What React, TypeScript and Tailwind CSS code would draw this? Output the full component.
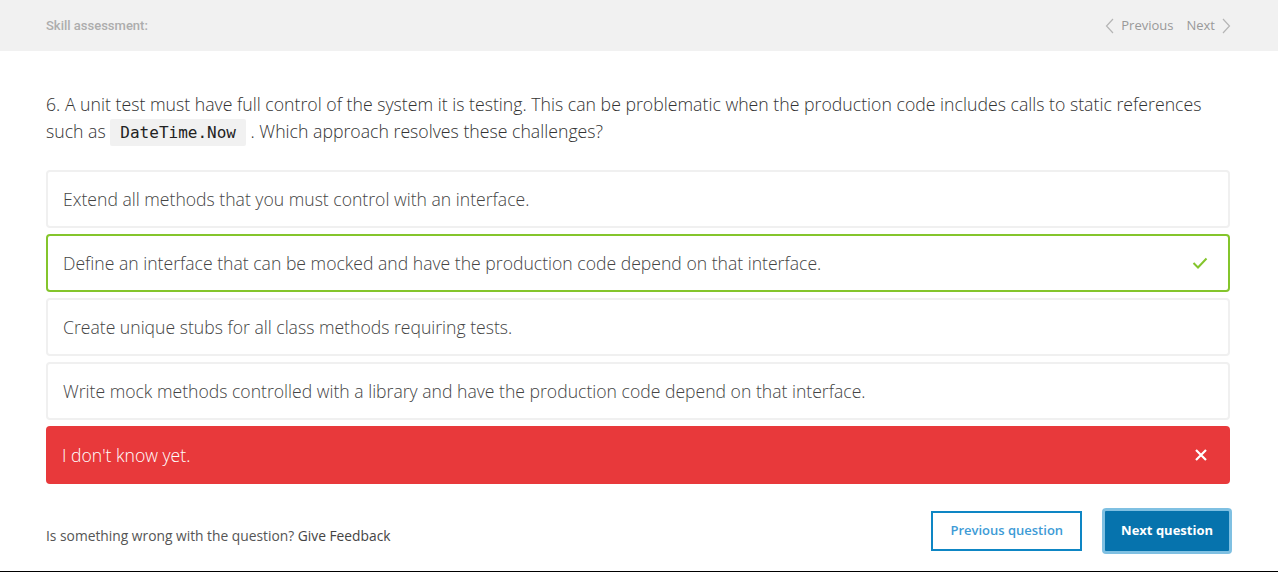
import React from "react";

const options = [
    "Extend all methods that you must control with an interface.",
    "Define an interface that can be mocked and have the production code depend on that interface.",
    "Create unique stubs for all class methods requiring tests.",
    "Write mock methods controlled with a library and have the production code depend on that interface.",
];

const App: React.FC = () => {
    const selected = 1;

    return (
        <div className="w-[1278px] h-[572px] bg-white border-b border-black flex flex-col" style={{ fontFamily: "'Open Sans', sans-serif" }}>
            {/* header */}
            <div className="h-[51px] bg-[#f1f1f1] flex items-center justify-between pl-[46px] pr-[47px] shrink-0">
                <span className="text-[13px] font-medium text-[#adadad]" style={{ fontFamily: "Roboto, sans-serif" }}>Skill assessment:</span>
                <div className="flex items-center gap-[13px] text-[13px] text-[#999999]">
                    <span className="flex items-center gap-[7px]">
                        <svg width="9" height="16" viewBox="0 0 9 16" fill="none" stroke="#b5b5b5" strokeWidth="1.2">
                            <path d="M8 1 L1.5 8 L8 15" />
                        </svg>
                        Previous
                    </span>
                    <span className="flex items-center gap-[7px]">
                        Next
                        <svg width="9" height="16" viewBox="0 0 9 16" fill="none" stroke="#b5b5b5" strokeWidth="1.2">
                            <path d="M1 1 L7.5 8 L1 15" />
                        </svg>
                    </span>
                </div>
            </div>

            <div className="pl-[46px] pr-[48px] pt-[40px] flex flex-col flex-1">
                <p className="text-[17.7px] leading-[27px] font-light text-[#333333]">
                    6. A unit test must have full control of the system it is testing. This can be problematic when the production code includes calls to static references such as{" "}
                    <code className="bg-[#f1f1f1] px-[10px] py-[4px] rounded-[2px] text-[16px] text-[#222] font-normal" style={{ fontFamily: "'DejaVu Sans Mono', monospace" }}>DateTime.Now</code>
                    {" "}. Which approach resolves these challenges?
                </p>

                <div className="mt-[24px] flex flex-col gap-[6px]">
                    {options.map((opt, i) => (
                        <div
                            key={i}
                            className={
                                i === selected
                                    ? "h-[58px] rounded-[4px] border-2 border-[#84c52c] flex items-center justify-between pl-[15px] pr-[20px]"
                                    : "h-[58px] rounded-[4px] border-2 border-[#f0f0f0] flex items-center pl-[15px]"
                            }
                        >
                            <span className="text-[17.6px] font-light text-[#444444]">{opt}</span>
                            {i === selected && (
                                <svg width="16" height="12" viewBox="0 0 16 12" fill="none" stroke="#84c52c" strokeWidth="2">
                                    <path d="M1.5 6 L6 10.5 L14.5 1.5" />
                                </svg>
                            )}
                        </div>
                    ))}
                    <div className="h-[58px] rounded-[4px] bg-[#e8393b] flex items-center justify-between pl-[16px] pr-[22px]">
                        <span className="text-[17.6px] font-light text-white">I don't know yet.</span>
                        <svg width="14" height="14" viewBox="0 0 14 14" fill="none" stroke="white" strokeWidth="2.2">
                            <path d="M2 2 L12 12 M12 2 L2 12" />
                        </svg>
                    </div>
                </div>

                <div className="mt-[24px] flex items-center justify-between">
                    <span className="text-[13.8px] text-[#555555] pt-[10px]">
                        Is something wrong with the question? <span className="text-[#444444]">Give Feedback</span>
                    </span>
                    <div className="flex items-center gap-[20px] mr-[-2px]">
                        <button className="h-[40px] px-[17px] border-2 border-[#0e86c4] text-[#3d9bd6] text-[13px] font-semibold bg-white">
                            Previous question
                        </button>
                        <button className="h-[46px] px-[16px] rounded-[4px] bg-[#0673ad] text-white text-[13px] font-bold border-[3px] border-[#7fc0e2]">
                            Next question
                        </button>
                    </div>
                </div>
            </div>
        </div>
    );
};

export default App;
